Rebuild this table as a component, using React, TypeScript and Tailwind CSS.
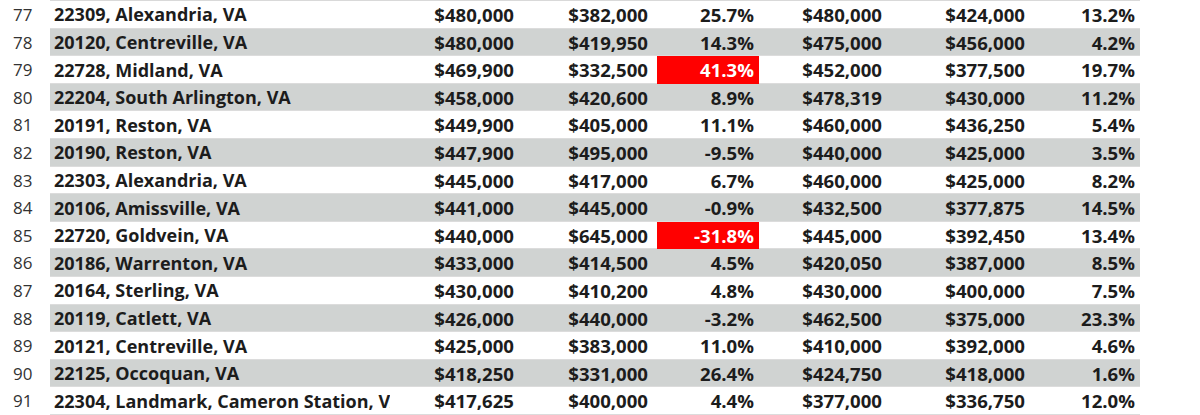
const rows = [
  { n: 77, name: '22309, Alexandria, VA', a: '$480,000', b: '$382,000', c: '25.7%', d: '$480,000', e: '$424,000', f: '13.2%' },
  { n: 78, name: '20120, Centreville, VA', a: '$480,000', b: '$419,950', c: '14.3%', d: '$475,000', e: '$456,000', f: '4.2%' },
  { n: 79, name: '22728, Midland, VA', a: '$469,900', b: '$332,500', c: '41.3%', d: '$452,000', e: '$377,500', f: '19.7%', hot: true },
  { n: 80, name: '22204, South Arlington, VA', a: '$458,000', b: '$420,600', c: '8.9%', d: '$478,319', e: '$430,000', f: '11.2%' },
  { n: 81, name: '20191, Reston, VA', a: '$449,900', b: '$405,000', c: '11.1%', d: '$460,000', e: '$436,250', f: '5.4%' },
  { n: 82, name: '20190, Reston, VA', a: '$447,900', b: '$495,000', c: '-9.5%', d: '$440,000', e: '$425,000', f: '3.5%' },
  { n: 83, name: '22303, Alexandria, VA', a: '$445,000', b: '$417,000', c: '6.7%', d: '$460,000', e: '$425,000', f: '8.2%' },
  { n: 84, name: '20106, Amissville, VA', a: '$441,000', b: '$445,000', c: '-0.9%', d: '$432,500', e: '$377,875', f: '14.5%' },
  { n: 85, name: '22720, Goldvein, VA', a: '$440,000', b: '$645,000', c: '-31.8%', d: '$445,000', e: '$392,450', f: '13.4%', hot: true },
  { n: 86, name: '20186, Warrenton, VA', a: '$433,000', b: '$414,500', c: '4.5%', d: '$420,050', e: '$387,000', f: '8.5%' },
  { n: 87, name: '20164, Sterling, VA', a: '$430,000', b: '$410,200', c: '4.8%', d: '$430,000', e: '$400,000', f: '7.5%' },
  { n: 88, name: '20119, Catlett, VA', a: '$426,000', b: '$440,000', c: '-3.2%', d: '$462,500', e: '$375,000', f: '23.3%' },
  { n: 89, name: '20121, Centreville, VA', a: '$425,000', b: '$383,000', c: '11.0%', d: '$410,000', e: '$392,000', f: '4.6%' },
  { n: 90, name: '22125, Occoquan, VA', a: '$418,250', b: '$331,000', c: '26.4%', d: '$424,750', e: '$418,000', f: '1.6%' },
  { n: 91, name: '22304, Landmark, Cameron Station, VA', a: '$417,625', b: '$400,000', c: '4.4%', d: '$377,000', e: '$336,750', f: '12.0%' },
];

export default function App() {
  return (
    <div className="w-[1200px] h-[415px] bg-white overflow-hidden font-['Open_Sans',sans-serif] text-[#1c1c1c]">
      <div className="ml-[50px] w-[1090px] h-px bg-[#d9d9d9]" />
      {rows.map((r, i) => (
        <div key={r.n} className="flex h-[27.6px]">
          <div className="w-[50px] shrink-0 pl-[13px] flex items-center text-[17px] text-[#333]">{r.n}</div>
          <div
            className={`grid grid-cols-[340px_129px_138px_102px_128px_143px_110px] w-[1090px] border-b border-[#dcdcdc] font-bold text-[18.6px] ${
              i % 2 === 1 ? 'bg-[#d0d3d2]' : 'bg-white'
            }`}
          >
            <div className="pl-[4px] pr-[2px] flex items-center overflow-hidden whitespace-nowrap text-[18px]">{r.name}</div>
            <div className="pr-[5px] flex items-center justify-end">{r.a}</div>
            <div className="pr-[9px] flex items-center justify-end">{r.b}</div>
            <div className={`pr-[5px] flex items-center justify-end ${r.hot ? 'bg-[#ff0000] text-white' : ''}`}>{r.c}</div>
            <div className="pr-[5px] flex items-center justify-end">{r.d}</div>
            <div className="pr-[5px] flex items-center justify-end">{r.e}</div>
            <div className="pr-[5px] flex items-center justify-end">{r.f}</div>
          </div>
        </div>
      ))}
    </div>
  );
}
